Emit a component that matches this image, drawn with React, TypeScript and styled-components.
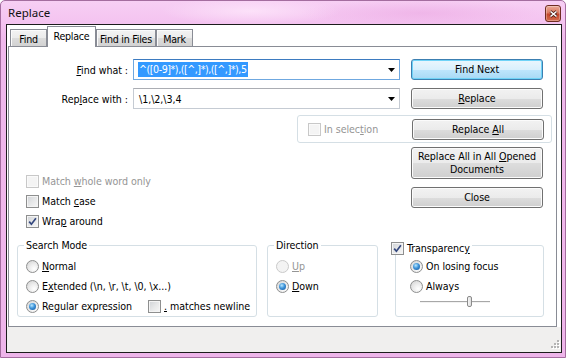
import React from 'react';
import styled, { createGlobalStyle, css } from 'styled-components';

const FONT = `"DejaVu Sans Condensed", "DejaVu Sans", Tahoma, sans-serif`;

interface TabInfo {
  label: string;
  width: number;
  active?: boolean;
}

const tabs: TabInfo[] = [
  { label: 'Find', width: 37 },
  { label: 'Replace', width: 49, active: true },
  { label: 'Find in Files', width: 60 },
  { label: 'Mark', width: 37 },
];

const CheckMark = () => (
  <svg width="9" height="9" viewBox="0 0 9 9">
    <path d="M1.2 4.6 L3.4 7.2 L7.9 1.2" fill="none" stroke="#34487e" strokeWidth="1.7" />
  </svg>
);

const Checkbox: React.FC<{ checked?: boolean; disabled?: boolean }> = ({ checked, disabled }) => (
  <CheckBox $disabled={disabled}>{checked && <CheckMark />}</CheckBox>
);

const ComboArrow = () => (
  <svg width="7" height="4" viewBox="0 0 7 4">
    <path d="M0 0 H7 L3.5 4 Z" fill="#000" />
  </svg>
);

const Grip = () => (
  <svg width="10" height="10" viewBox="0 0 10 10">
    {[
      [7, 0], [4, 3], [7, 3], [1, 6], [4, 6], [7, 6],
    ].map(([x, y]) => (
      <g key={`${x}-${y}`}>
        <rect x={x + 1} y={y + 1} width="2" height="2" fill="#fff" />
        <rect x={x} y={y} width="2" height="2" fill="#b4b4b4" />
      </g>
    ))}
  </svg>
);

const App: React.FC = () => {
  return (
    <>
      <GlobalStyle />
      <Window>
        <TitleBar>
          <Title>Replace</Title>
          <CloseButton>
            <svg width="9" height="8" viewBox="0 0 9 8">
              <path d="M1.5 1.5 L7.5 6.5 M7.5 1.5 L1.5 6.5" stroke="#4a1c14" strokeWidth="3" />
              <path d="M1.5 1.5 L7.5 6.5 M7.5 1.5 L1.5 6.5" stroke="#fff" strokeWidth="1.6" />
            </svg>
          </CloseButton>
        </TitleBar>
        <Client>
          <TabArea>
            <TabStrip>
              {tabs.map((t) => (
                <Tab key={t.label} $active={t.active} $width={t.width}>
                  {t.label}
                </Tab>
              ))}
            </TabStrip>
            <Panel>
              <TopGrid>
                <FieldLabel>
                  <U>F</U>ind what :
                </FieldLabel>
                <Combo $focused>
                  <Selected>^([0-9]*),([^,]*),([^,]*),5</Selected>
                  <ComboArrow />
                </Combo>
                <Button $default>Find Next</Button>
                <FieldLabel>
                  Rep<U>l</U>ace with :
                </FieldLabel>
                <Combo>
                  <ComboText>\1,\2,\3,4</ComboText>
                  <ComboArrow />
                </Combo>
                <Button>
                  <U>R</U>eplace
                </Button>
              </TopGrid>

              <SelectionBox>
                <Option $disabled>
                  <Checkbox disabled />
                  <span>
                    In selec<U>t</U>ion
                  </span>
                </Option>
                <Button>
                  Replace <U>A</U>ll
                </Button>
              </SelectionBox>

              <MiddleRow>
                <OptionsColumn>
                  <CheckRow>
                    <Option $disabled>
                      <Checkbox disabled />
                      <span>
                        Match <U>w</U>hole word only
                      </span>
                    </Option>
                  </CheckRow>
                  <CheckRow>
                    <Option>
                      <Checkbox />
                      <span>
                        Match <U>c</U>ase
                      </span>
                    </Option>
                  </CheckRow>
                  <CheckRow>
                    <Option>
                      <Checkbox checked />
                      <span>
                        Wra<U>p</U> around
                      </span>
                    </Option>
                  </CheckRow>
                </OptionsColumn>
                <ButtonColumn>
                  <Button $tall>
                    Replace All in All <U>O</U>pened
                    <br />
                    Documents
                  </Button>
                  <Button>Close</Button>
                </ButtonColumn>
              </MiddleRow>

              <GroupRow>
                <GroupBox $width={240} $padLeft={8}>
                  <GroupTitle $left={6}>Search Mode</GroupTitle>
                  <OptionRow>
                    <Option>
                      <Radio />
                      <span>
                        <U>N</U>ormal
                      </span>
                    </Option>
                  </OptionRow>
                  <OptionRow>
                    <Option>
                      <Radio />
                      <span>
                        E<U>x</U>tended (\n, \r, \t, \0, \x...)
                      </span>
                    </Option>
                  </OptionRow>
                  <OptionRow>
                    <Option $width={122}>
                      <Radio $checked />
                      <span>
                        Re<U>g</U>ular expression
                      </span>
                    </Option>
                    <Option>
                      <Checkbox />
                      <span>
                        <U>.</U> matches newline
                      </span>
                    </Option>
                  </OptionRow>
                </GroupBox>

                <GroupBox $width={111} $padLeft={8} $gap={10}>
                  <GroupTitle $left={6}>Direction</GroupTitle>
                  <OptionRow>
                    <Option $disabled>
                      <Radio $disabled />
                      <span>
                        <U>U</U>p
                      </span>
                    </Option>
                  </OptionRow>
                  <OptionRow>
                    <Option>
                      <Radio $checked />
                      <span>
                        <U>D</U>own
                      </span>
                    </Option>
                  </OptionRow>
                </GroupBox>

                <GroupBox $width={149} $padLeft={14} $gap={17}>
                  <GroupTitle $left={-7} $top={-4}>
                    <Option>
                      <Checkbox checked />
                      <span>
                        Transparenc<U>y</U>
                      </span>
                    </Option>
                  </GroupTitle>
                  <OptionRow>
                    <Option>
                      <Radio $checked />
                      <span>On losing focus</span>
                    </Option>
                  </OptionRow>
                  <OptionRow>
                    <Option>
                      <Radio />
                      <span>Always</span>
                    </Option>
                  </OptionRow>
                  <Slider>
                    <SliderThumb style={{ left: 47 }} />
                  </Slider>
                </GroupBox>
              </GroupRow>
            </Panel>
          </TabArea>
          <StatusBar>
            <Grip />
          </StatusBar>
        </Client>
      </Window>
    </>
  );
};

export default App;

const GlobalStyle = createGlobalStyle`
  html, body {
    margin: 0;
    padding: 0;
    background: #fff;
  }
  body {
    width: 566px;
    height: 358px;
    overflow: hidden;
    font-family: ${FONT};
    font-size: 10.6px;
    letter-spacing: -0.05px;
    color: #000;
  }
`;

const Window = styled.div`
  width: 566px;
  height: 358px;
  box-sizing: border-box;
  border: 1px solid #a46d9f;
  border-radius: 5px 5px 0 0;
  padding: 0 3px 4px 5px;
  display: flex;
  flex-direction: column;
  background:
    radial-gradient(ellipse 90px 14px at 250px 10px, rgba(255, 235, 252, 0.7), transparent),
    radial-gradient(ellipse 120px 14px at 420px 12px, rgba(232, 160, 222, 0.45), transparent),
    linear-gradient(180deg, #f7cff4 0px, #f4c3f0 22px, #efb8eb 40px, #eeb5ea 100%);
`;

const TitleBar = styled.div`
  height: 23px;
  display: flex;
  justify-content: space-between;
  align-items: flex-start;
`;

const Title = styled.div`
  margin-left: 2px;
  line-height: 23px;
  font-family: "Noto Sans", "Open Sans", sans-serif;
  font-size: 11.5px;
  letter-spacing: 0;
  color: #111;
`;

const CloseButton = styled.div`
  width: 16px;
  height: 17px;
  box-sizing: border-box;
  margin: 4px 1px 0 0;
  border: 1px solid #6e2c22;
  border-radius: 3px;
  background: linear-gradient(180deg, #eaa896 0%, #da7a61 45%, #c5462b 55%, #d36c4e 100%);
  box-shadow: inset 0 0 0 1px rgba(255, 255, 255, 0.3);
  display: flex;
  align-items: center;
  justify-content: center;
`;

const Client = styled.div`
  flex: 1;
  border: 1px solid #1c1c1c;
  background: #fff;
  display: flex;
  flex-direction: column;
`;

const TabArea = styled.div`
  flex: 1;
  display: flex;
  flex-direction: column;
  padding: 1px 4px 0 1px;
`;

const TabStrip = styled.div`
  height: 20px;
  padding-left: 2px;
  display: flex;
  align-items: flex-end;
`;

const Tab = styled.div<{ $active?: boolean; $width: number }>`
  width: ${(p) => p.$width}px;
  box-sizing: border-box;
  border: 1px solid #898c95;
  border-bottom: none;
  display: flex;
  align-items: center;
  justify-content: center;
  white-space: nowrap;
  letter-spacing: -0.25px;
  ${(p) =>
    p.$active
      ? css`
          height: 21px;
          margin-bottom: -1px;
          background: #fff;
          position: relative;
          z-index: 1;
          padding-bottom: 2px;
        `
      : css`
          height: 17px;
          background: linear-gradient(180deg, #f3f3f3 0%, #ebebeb 50%, #dcdcdc 51%, #d2d2d2 100%);
          box-shadow: inset 1px 1px 0 #fbfbfb;
          padding-top: 1px;
        `}
`;

const Panel = styled.div`
  flex: 1;
  border: 1px solid #898c95;
  background: #fff;
`;

const TopGrid = styled.div`
  display: grid;
  grid-template-columns: 124px 278px 132px;
  grid-auto-rows: 21px;
  row-gap: 8px;
  padding-top: 12px;
  align-items: center;
`;

const FieldLabel = styled.div`
  text-align: right;
  padding-right: 5px;
  white-space: nowrap;
`;

const U = styled.span`
  text-decoration: underline;
`;

const Combo = styled.div<{ $focused?: boolean }>`
  width: 267px;
  height: 21px;
  box-sizing: border-box;
  border: 1px solid ${(p) => (p.$focused ? '#6fa8e0' : '#c5cbd3')};
  border-top-color: ${(p) => (p.$focused ? '#3d7bc0' : '#abadb3')};
  background: #fff;
  display: flex;
  align-items: center;
  justify-content: space-between;
  padding: 0 4px 0 4px;
`;

const Selected = styled.span`
  background: #3399ff;
  color: #fff;
  padding: 1px 1px;
  line-height: 13px;
  letter-spacing: -0.45px;
`;

const ComboText = styled.span`
  padding-left: 1px;
`;

const Button = styled.button<{ $default?: boolean; $tall?: boolean }>`
  width: 132px;
  height: ${(p) => (p.$tall ? 32 : 21)}px;
  box-sizing: border-box;
  margin: 0;
  padding: 0;
  font-family: ${FONT};
  font-size: 10.6px;
  letter-spacing: -0.05px;
  line-height: 13px;
  color: #000;
  text-align: center;
  border-radius: 3px;
  border: 1px solid #707070;
  background: linear-gradient(180deg, #f2f2f2 0%, #ebebeb 50%, #dddddd 51%, #cfcfcf 100%);
  box-shadow: inset 0 0 0 1px #fbfbfb;
  ${(p) =>
    p.$default &&
    css`
      border-color: #3c7fb1;
      background: linear-gradient(180deg, #eaf6fd 0%, #d9f0fc 50%, #bee6fd 51%, #a7d9f5 100%);
      box-shadow: inset 0 0 0 1px #6fd3f7;
    `}
`;

const SelectionBox = styled.div`
  margin: 6px 0 0 288px;
  width: 255px;
  height: 28px;
  box-sizing: border-box;
  border: 1px solid #d5dfe5;
  border-radius: 3px;
  display: flex;
  align-items: center;
  justify-content: space-between;
  padding: 0 7px 0 10px;
`;

const Option = styled.div<{ $disabled?: boolean; $width?: number }>`
  display: flex;
  align-items: center;
  gap: 3px;
  white-space: nowrap;
  color: ${(p) => (p.$disabled ? '#959595' : '#000')};
  ${(p) => p.$width && `width: ${p.$width}px;`}
`;

const CheckBox = styled.span<{ $disabled?: boolean }>`
  flex: none;
  width: 13px;
  height: 13px;
  box-sizing: border-box;
  border: 1px solid ${(p) => (p.$disabled ? '#c8c8c8' : '#8e8f8f')};
  background: ${(p) =>
    p.$disabled
      ? '#f4f4f4'
      : 'linear-gradient(135deg, #cfd2d6 0%, #e6e7e8 50%, #f7f7f7 100%)'};
  box-shadow: inset 0 0 0 1px ${(p) => (p.$disabled ? '#fafafa' : '#f4f4f4')};
  display: flex;
  align-items: center;
  justify-content: center;
`;

const Radio = styled.span<{ $checked?: boolean; $disabled?: boolean }>`
  flex: none;
  position: relative;
  width: 13px;
  height: 13px;
  box-sizing: border-box;
  border-radius: 50%;
  border: 1px solid ${(p) => (p.$disabled ? '#cacaca' : '#8e8f8f')};
  background: ${(p) =>
    p.$disabled
      ? '#f3f3f3'
      : 'radial-gradient(circle at 65% 70%, #ffffff 0%, #ececec 45%, #cfcfcf 100%)'};
  ${(p) =>
    p.$checked &&
    css`
      &::after {
        content: '';
        position: absolute;
        left: 2px;
        top: 2px;
        width: 7px;
        height: 7px;
        border-radius: 50%;
        background: radial-gradient(circle at 40% 35%, #b9e8ff 0%, #3d93d9 45%, #134f92 100%);
      }
    `}
`;

const MiddleRow = styled.div`
  display: grid;
  grid-template-columns: 402px 132px;
`;

const OptionsColumn = styled.div`
  padding: 28px 0 0 17px;
`;

const CheckRow = styled.div`
  height: 20px;
  display: flex;
  align-items: center;
`;

const ButtonColumn = styled.div`
  padding-top: 4px;
  display: flex;
  flex-direction: column;
  gap: 8px;
`;

const GroupRow = styled.div`
  display: flex;
  align-items: flex-start;
  margin-top: 14px;
  padding-left: 8px;
`;

const GroupBox = styled.div<{ $width: number; $padLeft: number; $gap?: number }>`
  position: relative;
  width: ${(p) => p.$width}px;
  height: 72px;
  box-sizing: border-box;
  margin-left: ${(p) => p.$gap ?? 0}px;
  border: 1px solid #d5dfe5;
  border-radius: 3px;
  padding: 10px 0 0 ${(p) => p.$padLeft}px;
`;

const GroupTitle = styled.div<{ $left: number; $top?: number }>`
  position: absolute;
  top: ${(p) => p.$top ?? -7}px;
  left: ${(p) => p.$left}px;
  padding: 0 2px;
  background: #fff;
  line-height: 13px;
  display: flex;
  align-items: center;
`;

const OptionRow = styled.div`
  height: 20px;
  display: flex;
  align-items: center;
`;

const Slider = styled.div`
  position: relative;
  margin-left: 10px;
  width: 70px;
  height: 11px;
  &::before {
    content: '';
    position: absolute;
    left: 0;
    right: 0;
    top: 5px;
    height: 1px;
    background: #a8a8a8;
    box-shadow: 0 1px 0 #f2f2f2;
  }
`;

const SliderThumb = styled.span`
  position: absolute;
  top: 0;
  width: 5px;
  height: 11px;
  box-sizing: border-box;
  border: 1px solid #8a8a8a;
  border-radius: 2px;
  background: linear-gradient(90deg, #f5f5f5, #dedede);
`;

const StatusBar = styled.div`
  height: 23px;
  background: #f0efee;
  display: flex;
  justify-content: flex-end;
  align-items: flex-end;
  padding: 0 1px 2px 0;
`;
